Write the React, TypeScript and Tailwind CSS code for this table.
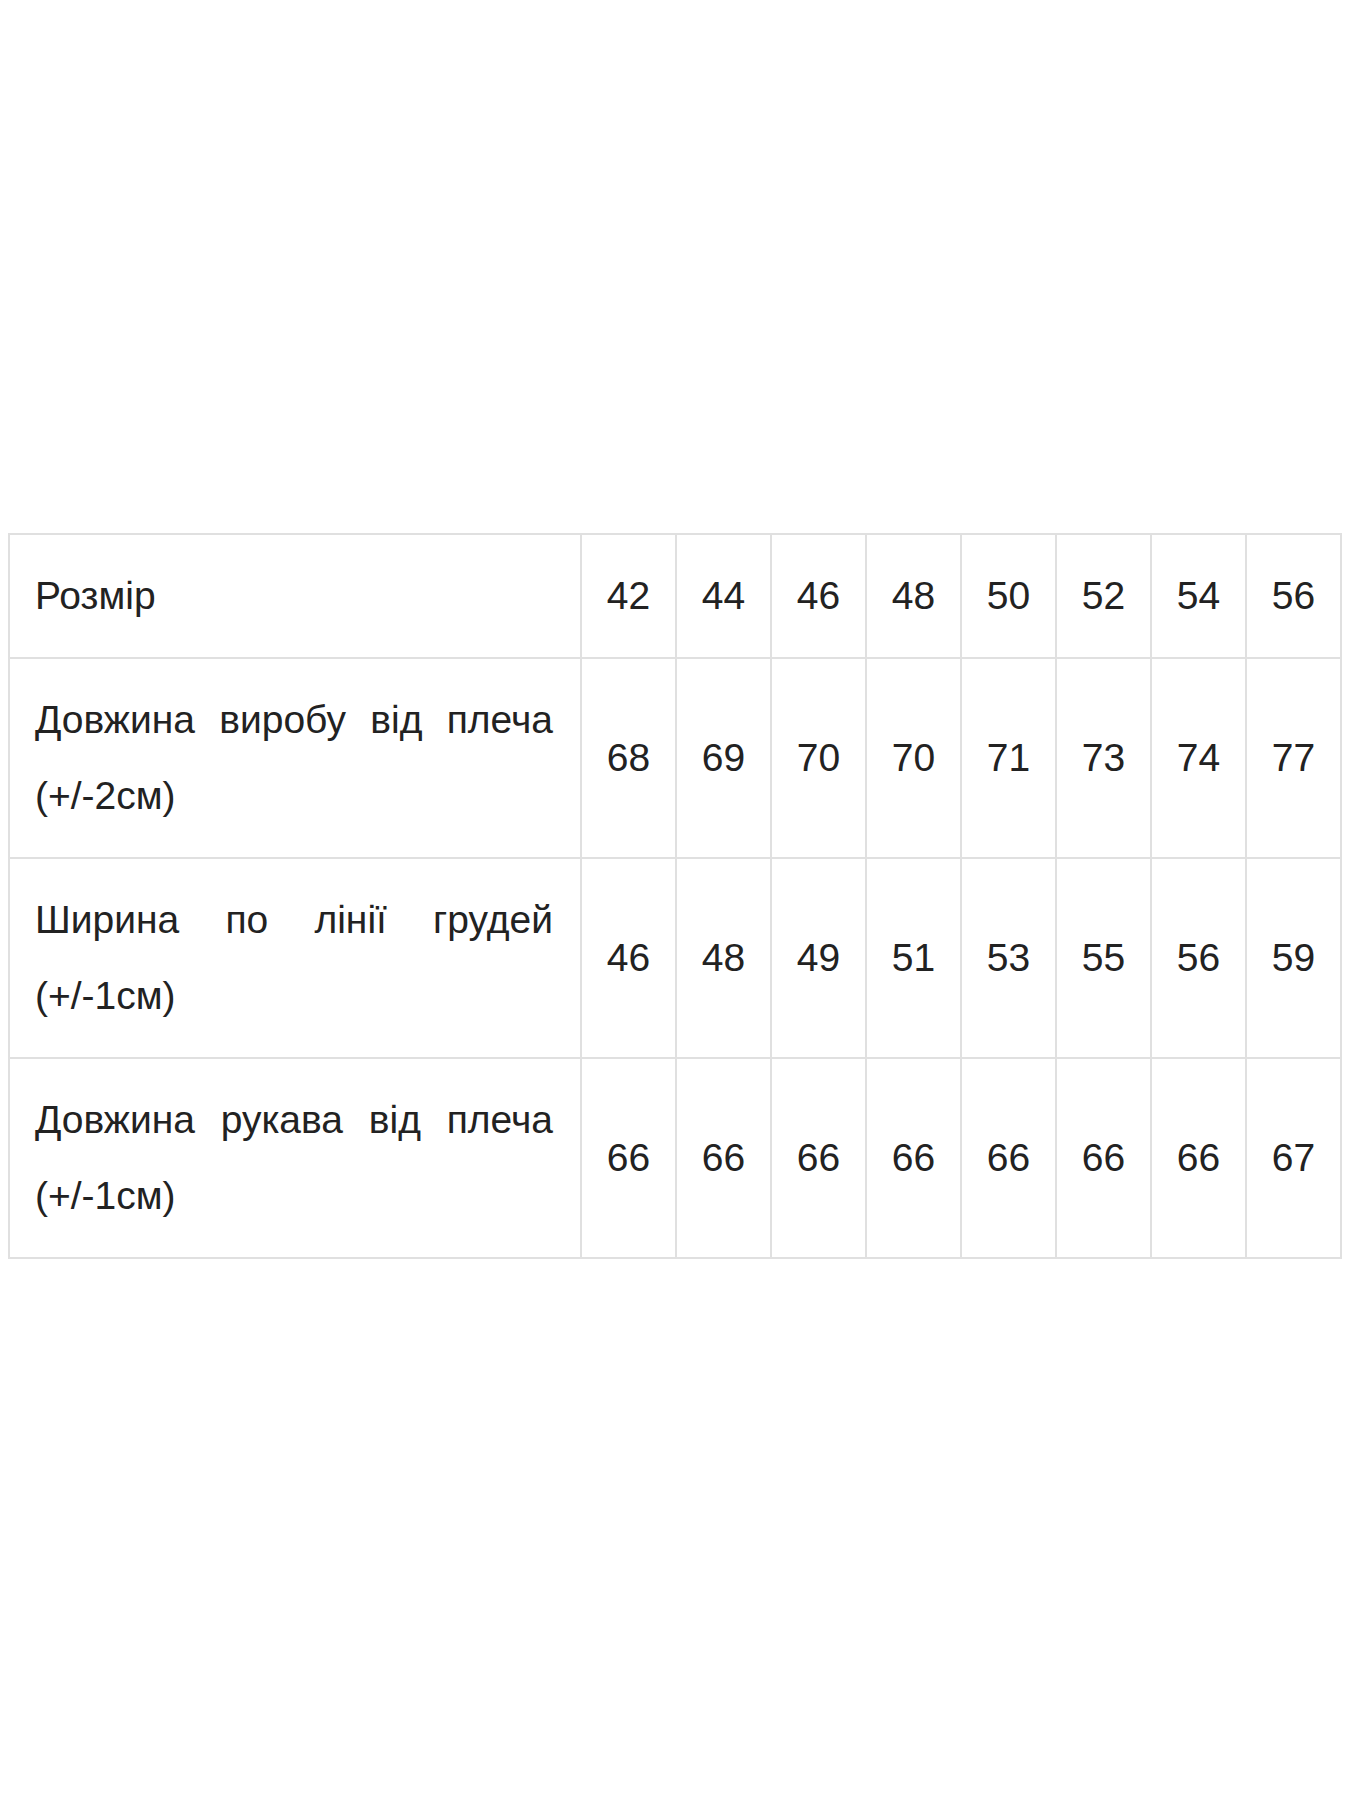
const sizes = ["42", "44", "46", "48", "50", "52", "54", "56"];

const rows = [
  { label: "Довжина виробу від плеча (+/-2см)", values: ["68", "69", "70", "70", "71", "73", "74", "77"] },
  { label: "Ширина по лінії грудей (+/-1см)", values: ["46", "48", "49", "51", "53", "55", "56", "59"] },
  { label: "Довжина рукава від плеча (+/-1см)", values: ["66", "66", "66", "66", "66", "66", "66", "67"] },
];

const cell = "border-2 border-[#e0e0e0] py-[23px] text-center align-middle";
const labelCell = "border-2 border-[#e0e0e0] py-[23px] pl-[25px] pr-[27px] text-justify align-middle";

export default function App() {
  return (
    <div className="min-h-[1800px] bg-white pt-[533px] pl-[8px] pr-[8px] font-['Liberation_Sans',Arial,sans-serif] text-[39px] leading-[76px] text-[#222]">
      <table className="w-[1332px] table-fixed border-collapse">
        <colgroup>
          <col className="w-[572px]" />
          {sizes.map((s) => (
            <col key={s} className="w-[95px]" />
          ))}
        </colgroup>
        <tbody>
          <tr>
            <td className={labelCell}>Розмір</td>
            {sizes.map((s) => (
              <td key={s} className={cell}>
                {s}
              </td>
            ))}
          </tr>
          {rows.map((r) => (
            <tr key={r.label}>
              <td className={labelCell}>{r.label}</td>
              {r.values.map((v, i) => (
                <td key={i} className={cell}>
                  {v}
                </td>
              ))}
            </tr>
          ))}
        </tbody>
      </table>
    </div>
  );
}
